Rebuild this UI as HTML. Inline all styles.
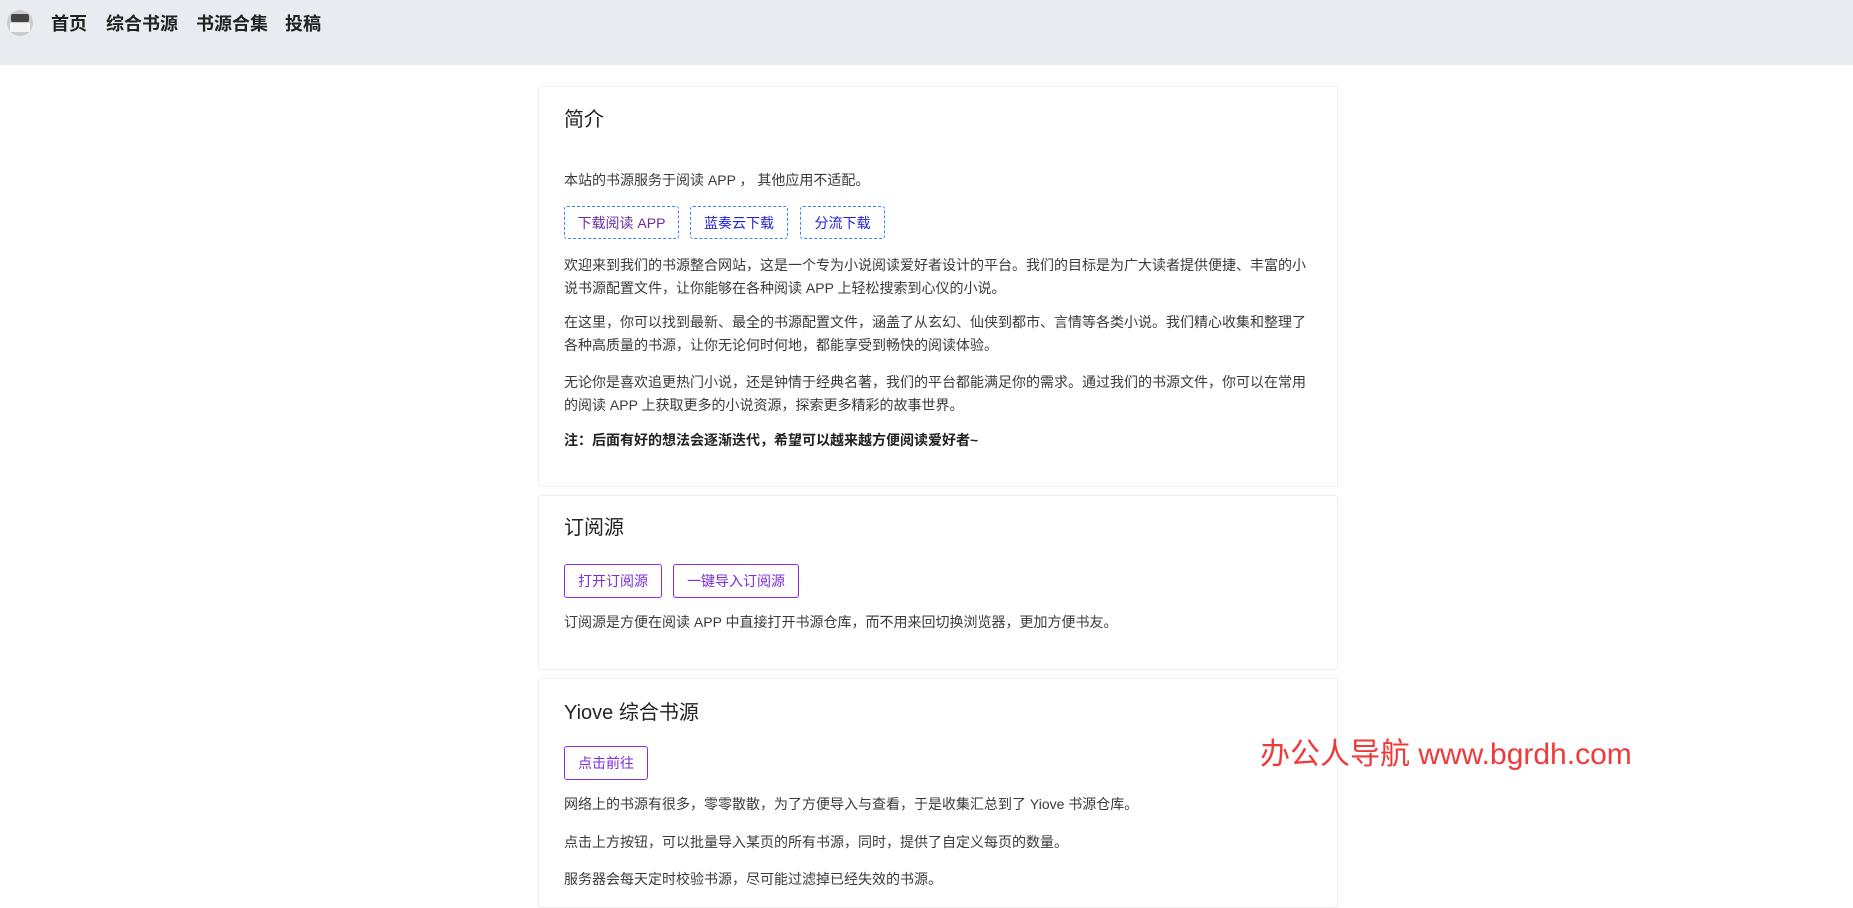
<!DOCTYPE html>
<html><head><meta charset="utf-8"><style>
*{margin:0;padding:0;box-sizing:border-box}
body{width:1853px;height:886px;overflow:hidden;background:#fff;font-family:"Liberation Sans","Noto Sans CJK SC",sans-serif;color:#333;position:relative}
.nav{position:absolute;left:0;top:0;width:1853px;height:65px;background:#e8ebf0}
.logo{position:absolute;left:7px;top:10px;width:26px;height:26px;border-radius:50%;background:#ccc;overflow:hidden}
.logo:before{content:"";position:absolute;left:4px;top:4px;width:18px;height:8px;background:#444;border-radius:2px}
.logo:after{content:"";position:absolute;left:3px;top:13px;width:20px;height:9px;background:#f4f4f4}
.nav a{position:absolute;top:12px;font-size:18px;font-weight:bold;color:#222;text-decoration:none;line-height:24px}
.card{position:absolute;left:538px;width:800px;border:1px solid #eceef2;border-radius:3px;background:#fff}
.t{position:absolute;left:564px;font-size:20px;color:#222;line-height:26px;white-space:nowrap}
.p{position:absolute;left:564px;width:745px;font-size:14px;line-height:23px;color:#3a3a3a}
.b{position:absolute;font-size:14px;line-height:1;display:flex;align-items:center;justify-content:center;border-radius:3px;white-space:nowrap}
.d{border:1px dashed #3b82f6;color:#2020e0}
.v{border:1px solid #8a2be2;color:#7a2be0}
.wm{position:absolute;left:1260px;top:737px;font-size:30px;color:#f03a3a;line-height:36px;white-space:nowrap}
</style></head><body>
<div class="nav">
<div class="logo"></div>
<a style="left:51px">首页</a>
<a style="left:106px">综合书源</a>
<a style="left:196px">书源合集</a>
<a style="left:285px">投稿</a>
</div>
<div class="card" style="top:86px;height:401px"></div>
<div class="card" style="top:495px;height:175px"></div>
<div class="card" style="top:678px;height:230px"></div>

<div class="t" style="top:107px">简介</div>
<div class="p" style="top:169px">本站的书源服务于阅读 APP ， 其他应用不适配。</div>
<div class="b d" style="left:564px;top:206px;width:115px;height:33px;color:#6a2ba0">下载阅读 APP</div>
<div class="b d" style="left:690px;top:206px;width:98px;height:33px">蓝奏云下载</div>
<div class="b d" style="left:800px;top:206px;width:85px;height:33px">分流下载</div>
<div class="p" style="top:254px">欢迎来到我们的书源整合网站，这是一个专为小说阅读爱好者设计的平台。我们的目标是为广大读者提供便捷、丰富的小说书源配置文件，让你能够在各种阅读 APP 上轻松搜索到心仪的小说。</div>
<div class="p" style="top:311px">在这里，你可以找到最新、最全的书源配置文件，涵盖了从玄幻、仙侠到都市、言情等各类小说。我们精心收集和整理了各种高质量的书源，让你无论何时何地，都能享受到畅快的阅读体验。</div>
<div class="p" style="top:371px">无论你是喜欢追更热门小说，还是钟情于经典名著，我们的平台都能满足你的需求。通过我们的书源文件，你可以在常用的阅读 APP 上获取更多的小说资源，探索更多精彩的故事世界。</div>
<div class="p" style="top:429px;font-weight:bold;color:#222">注：后面有好的想法会逐渐迭代，希望可以越来越方便阅读爱好者~</div>

<div class="t" style="top:515px">订阅源</div>
<div class="b v" style="left:564px;top:564px;width:98px;height:34px">打开订阅源</div>
<div class="b v" style="left:673px;top:564px;width:126px;height:34px">一键导入订阅源</div>
<div class="p" style="top:611px">订阅源是方便在阅读 APP 中直接打开书源仓库，而不用来回切换浏览器，更加方便书友。</div>

<div class="t" style="top:700px">Yiove 综合书源</div>
<div class="b v" style="left:564px;top:746px;width:84px;height:34px">点击前往</div>
<div class="p" style="top:793px">网络上的书源有很多，零零散散，为了方便导入与查看，于是收集汇总到了 Yiove 书源仓库。</div>
<div class="p" style="top:831px">点击上方按钮，可以批量导入某页的所有书源，同时，提供了自定义每页的数量。</div>
<div class="p" style="top:868px">服务器会每天定时校验书源，尽可能过滤掉已经失效的书源。</div>

<div class="wm">办公人导航 www.bgrdh.com</div>
</body></html>
